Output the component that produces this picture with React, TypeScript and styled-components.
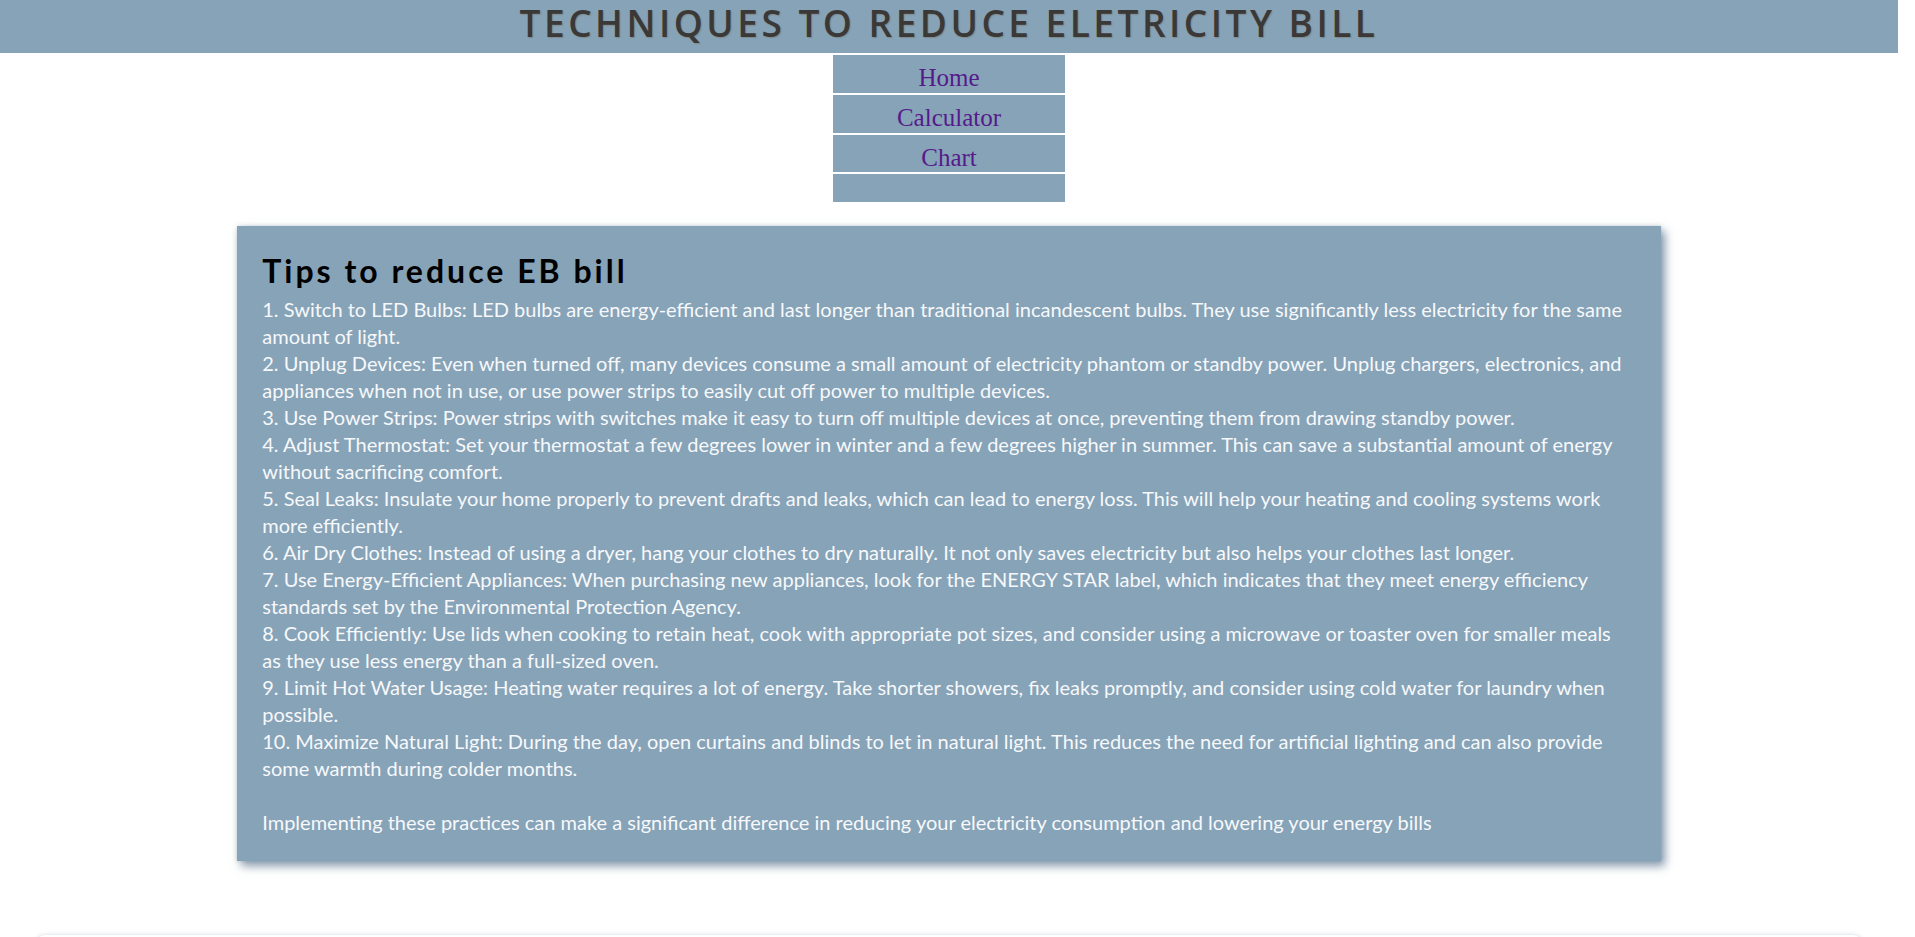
import React from "react";
import styled, { createGlobalStyle } from "styled-components";

const GlobalStyle = createGlobalStyle`
  html, body {
    margin: 0;
    padding: 0;
    background: #ffffff;
  }
  body {
    font-family: "Lato", "Noto Sans", sans-serif;
  }
`;

const Page = styled.div`
  margin-right: 17px;
  display: flex;
  flex-direction: column;
  align-items: center;
  padding-bottom: 26px;
`;

const Header = styled.header`
  align-self: stretch;
  height: 53px;
  background: #87a3b7;
  display: flex;
  align-items: center;
  justify-content: center;
`;

const Title = styled.h1`
  margin: 0 0 7px;
  font-family: "Open Sans", "Noto Sans", sans-serif;
  font-weight: 600;
  font-size: 37px;
  line-height: 46px;
  letter-spacing: 3.5px;
  color: #3b3838;
  text-shadow: 1px 1px 1px rgba(110, 95, 60, 0.35);
  white-space: nowrap;
`;

const Nav = styled.nav`
  margin-top: 2px;
  width: 232px;
  display: flex;
  flex-direction: column;
  gap: 2px;
`;

const NavItem = styled.a<{ $h: number }>`
  display: block;
  box-sizing: border-box;
  height: ${(p) => p.$h}px;
  padding-top: 9px;
  background: #87a3b7;
  text-align: center;
  font-family: "Liberation Serif", "Times New Roman", serif;
  font-size: 25px;
  line-height: 28px;
  color: #551a8b;
  text-decoration: none;
`;

const Card = styled.section`
  box-sizing: border-box;
  width: 75%;
  margin-top: 24px;
  padding: 25px;
  background: #87a3b7;
  box-shadow: 4px 5px 9px rgba(95, 120, 145, 0.75), 0 0 4px rgba(95, 120, 145, 0.25);
`;

const CardTitle = styled.h2`
  margin: 0 0 5px;
  font-family: "Lato", "Noto Sans", sans-serif;
  font-weight: 700;
  font-size: 32px;
  line-height: 40px;
  letter-spacing: 3px;
  color: #000000;
`;

const Body = styled.div`
  font-family: "Lato", "Noto Sans", sans-serif;
  font-size: 20px;
  line-height: 27px;
  color: #f6f8fb;
  white-space: nowrap;
`;

const Tip = styled.div``;

const Spacer = styled.div`
  height: 27px;
`;

const Lower = styled.section`
  box-sizing: border-box;
  align-self: stretch;
  margin: 74px 35px 0;
  height: 560px;
  border-radius: 10px;
  background: #ffffff;
  box-shadow: 0 0 4px rgba(120, 140, 170, 0.35);
`;

const tips: string[][] = [
  [
    "1. Switch to LED Bulbs: LED bulbs are energy-efficient and last longer than traditional incandescent bulbs. They use significantly less electricity for the same",
    "amount of light.",
  ],
  [
    "2. Unplug Devices: Even when turned off, many devices consume a small amount of electricity phantom or standby power. Unplug chargers, electronics, and",
    "appliances when not in use, or use power strips to easily cut off power to multiple devices.",
  ],
  [
    "3. Use Power Strips: Power strips with switches make it easy to turn off multiple devices at once, preventing them from drawing standby power.",
  ],
  [
    "4. Adjust Thermostat: Set your thermostat a few degrees lower in winter and a few degrees higher in summer. This can save a substantial amount of energy",
    "without sacrificing comfort.",
  ],
  [
    "5. Seal Leaks: Insulate your home properly to prevent drafts and leaks, which can lead to energy loss. This will help your heating and cooling systems work",
    "more efficiently.",
  ],
  [
    "6. Air Dry Clothes: Instead of using a dryer, hang your clothes to dry naturally. It not only saves electricity but also helps your clothes last longer.",
  ],
  [
    "7. Use Energy-Efficient Appliances: When purchasing new appliances, look for the ENERGY STAR label, which indicates that they meet energy efficiency",
    "standards set by the Environmental Protection Agency.",
  ],
  [
    "8. Cook Efficiently: Use lids when cooking to retain heat, cook with appropriate pot sizes, and consider using a microwave or toaster oven for smaller meals",
    "as they use less energy than a full-sized oven.",
  ],
  [
    "9. Limit Hot Water Usage: Heating water requires a lot of energy. Take shorter showers, fix leaks promptly, and consider using cold water for laundry when",
    "possible.",
  ],
  [
    "10. Maximize Natural Light: During the day, open curtains and blinds to let in natural light. This reduces the need for artificial lighting and can also provide",
    "some warmth during colder months.",
  ],
];

const navLinks = [
  { label: "Home", h: 38 },
  { label: "Calculator", h: 38 },
  { label: "Chart", h: 37 },
  { label: "", h: 28 },
];

export default function App() {
  return (
    <>
      <GlobalStyle />
      <Page>
        <Header>
          <Title>TECHNIQUES TO REDUCE ELETRICITY BILL</Title>
        </Header>
        <Nav>
          {navLinks.map((l, i) => (
            <NavItem key={i} $h={l.h} href="#">
              {l.label}
            </NavItem>
          ))}
        </Nav>
        <Card>
          <CardTitle>Tips to reduce EB bill</CardTitle>
          <Body>
            {tips.map((lines, i) => (
              <Tip key={i}>
                {lines.map((line, j) => (
                  <React.Fragment key={j}>
                    {j > 0 && <br />}
                    {line}
                  </React.Fragment>
                ))}
              </Tip>
            ))}
            <Spacer />
            <Tip>
              Implementing these practices can make a significant difference in reducing your electricity consumption and lowering your energy bills
            </Tip>
          </Body>
        </Card>
        <Lower />
      </Page>
    </>
  );
}
